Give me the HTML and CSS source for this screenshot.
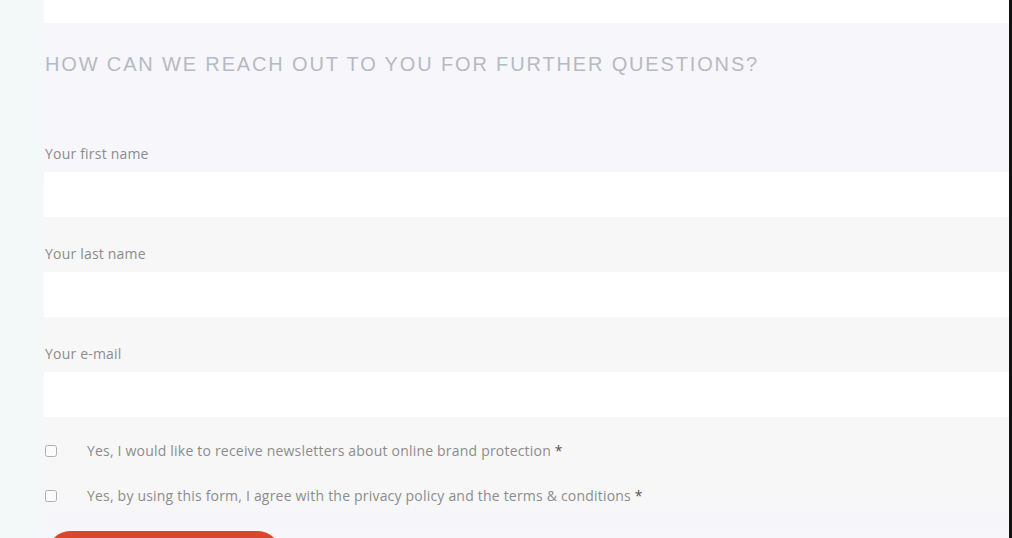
FILE: index.html
```html
<!DOCTYPE html>
<html lang="en">
<head>
  <meta charset="UTF-8">
  <title>Contact form</title>
  <link rel="stylesheet" href="styles.css">
</head>
<body>

  <div class="page">
    <div class="side"></div>

    <div class="main">
      <div class="top-box"></div>

      <div class="intro">
        <h2>How can we reach out to you for further questions?</h2>
      </div>

      <form class="form">
        <div class="field">
          <label for="first">Your first name</label>
          <input type="text" id="first">
        </div>
        <div class="field">
          <label for="last">Your last name</label>
          <input type="text" id="last">
        </div>
        <div class="field last">
          <label for="mail">Your e-mail</label>
          <input type="email" id="mail">
        </div>

        <div class="check">
          <input type="checkbox" id="news">
          <label for="news">Yes, I would like to receive newsletters about online brand protection <b>*</b></label>
        </div>
        <div class="check">
          <input type="checkbox" id="terms">
          <label for="terms">Yes, by using this form, I agree with the privacy policy and the terms &amp; conditions <b>*</b></label>
        </div>

        <div class="actions">
          <button type="submit" class="send">Send</button>
        </div>
      </form>
    </div>

    <div class="edge"></div>
  </div>

</body>
</html>
```

FILE: styles.css
```css
html, body {
  margin: 0;
  height: 100%;
  overflow: hidden;
}
body {
  font-family: "Open Sans", "Liberation Sans", sans-serif;
  background-color: #f3f9f8;
}
.page {
  display: flex;
  height: 538px;
  overflow: hidden;
}
.side {
  width: 43px;
  flex-shrink: 0;
  background-color: #f3f9f8;
}
.main {
  flex: 1;
  background: linear-gradient(#f6f6fb 0, #f6f6fb 165px, #f7f7f8 200px, #f7f7f8 500px, #f6f6fb 530px);
}
.edge {
  width: 3px;
  flex-shrink: 0;
  background-color: #111;
}
.top-box {
  height: 23px;
  margin-left: 1px;
  background-color: #fff;
}
.intro {
  padding: 29px 0 0 2px;
}
.intro h2 {
  margin: 0;
  font-family: "Liberation Sans", sans-serif;
  font-weight: normal;
  font-size: 20px;
  line-height: 24px;
  letter-spacing: 1.85px;
  text-transform: uppercase;
  color: #b6bac2;
}
.form {
  padding: 68px 0 0 1px;
}
.field label {
  display: block;
  padding-left: 1px;
  font-size: 14px;
  line-height: 20px;
  letter-spacing: 0.2px;
  color: #8c8c8c;
  margin-bottom: 8px;
}
.field input {
  display: block;
  box-sizing: border-box;
  width: 100%;
  height: 45px;
  border: none;
  background-color: #fff;
  margin-bottom: 27px;
  outline: none;
}
.field.last input {
  margin-bottom: 24px;
}
.check {
  display: flex;
  align-items: center;
  height: 20px;
  margin-bottom: 25px;
  padding-left: 1px;
}
.check input {
  width: 12px;
  height: 12px;
  margin: 0 30px 0 0;
  opacity: 0.55;
}
.check label {
  font-size: 14px;
  line-height: 20px;
  letter-spacing: 0.2px;
  color: #8c8c8c;
}
.check b {
  font-weight: normal;
  color: #555;
}
.actions {
  padding-left: 4px;
  margin-top: 25px;
}
.send {
  box-sizing: border-box;
  width: 232px;
  height: 44px;
  padding: 16px 0 0;
  border: none;
  border-radius: 22px;
  background-color: #d6482b;
  color: #fff;
  font-family: "Open Sans", sans-serif;
  font-size: 15px;
  line-height: 20px;
  text-transform: uppercase;
}
```
